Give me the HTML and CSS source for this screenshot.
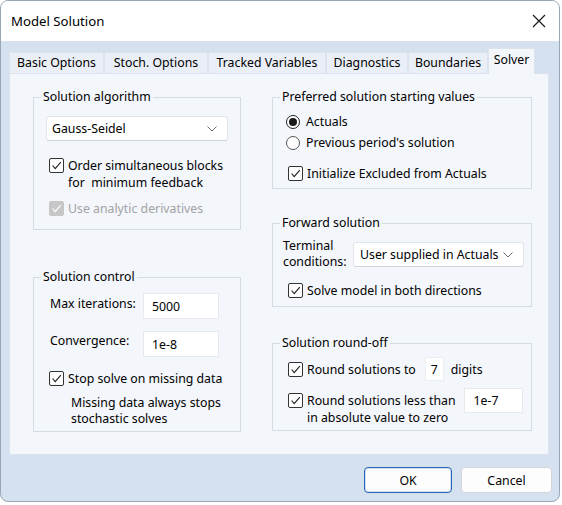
FILE: index.html
```html
<!DOCTYPE html>
<html>
<head>
<meta charset="utf-8">
<link rel="stylesheet" href="styles.css">
</head>
<body>
<div class="window">
  <div class="titlebar">
    <span class="title">Model Solution</span>
    <svg class="close" width="14" height="14" viewBox="0 0 14 14"><path d="M1 1L13 13M13 1L1 13" stroke="#1a1a1a" stroke-width="1.2" fill="none"/></svg>
  </div>
  <div class="content">
    <div class="tabs">
      <div class="tab">Basic Options</div>
      <div class="tab">Stoch. Options</div>
      <div class="tab">Tracked Variables</div>
      <div class="tab">Diagnostics</div>
      <div class="tab">Boundaries</div>
      <div class="tab active">Solver</div>
    </div>
    <div class="page">
      <div class="col col-left">
        <fieldset class="group g-algo">
          <legend>Solution algorithm</legend>
          <div class="combo combo-algo"><span>Gauss-Seidel</span><svg class="chev" width="10" height="6" viewBox="0 0 10 6"><path d="M0.5 0.5L5 5L9.5 0.5" stroke="#6b6b6b" stroke-width="1" fill="none"/></svg></div>
          <div class="check-row r-order">
            <span class="cb"><svg viewBox="0 0 15 15"><path d="M3 7.5L6 11L12.5 3.5" stroke="#202020" stroke-width="1.3" fill="none"/></svg></span>
            <span class="cb-text">Order simultaneous blocks<br>for&nbsp; minimum feedback</span>
          </div>
          <div class="check-row r-analytic disabled">
            <span class="cb cb-disabled"><svg viewBox="0 0 15 15"><path d="M3 7.5L6 11L12.5 3.5" stroke="#ffffff" stroke-width="1.3" fill="none"/></svg></span>
            <span class="cb-text">Use analytic derivatives</span>
          </div>
        </fieldset>
        <fieldset class="group g-control">
          <legend>Solution control</legend>
          <div class="field-row r-maxit">
            <span class="field-label">Max iterations:</span>
            <span class="textbox tb-num">5000</span>
          </div>
          <div class="field-row r-conv">
            <span class="field-label">Convergence:</span>
            <span class="textbox tb-num">1e-8</span>
          </div>
          <div class="check-row r-stop">
            <span class="cb"><svg viewBox="0 0 15 15"><path d="M3 7.5L6 11L12.5 3.5" stroke="#202020" stroke-width="1.3" fill="none"/></svg></span>
            <span class="cb-text">Stop solve on missing data</span>
          </div>
          <div class="note">Missing data always stops<br>stochastic solves</div>
        </fieldset>
      </div>
      <div class="col col-right">
        <fieldset class="group g-start">
          <legend>Preferred solution starting values</legend>
          <div class="radio-row r-actuals">
            <span class="radio checked"></span><span>Actuals</span>
          </div>
          <div class="radio-row">
            <span class="radio"></span><span>Previous period's solution</span>
          </div>
          <div class="check-row r-init">
            <span class="cb"><svg viewBox="0 0 15 15"><path d="M3 7.5L6 11L12.5 3.5" stroke="#202020" stroke-width="1.3" fill="none"/></svg></span>
            <span class="cb-text">Initialize Excluded from Actuals</span>
          </div>
        </fieldset>
        <fieldset class="group g-forward">
          <legend>Forward solution</legend>
          <div class="term-row">
            <span class="term-label">Terminal<br>conditions:</span>
            <div class="combo combo-term"><span>User supplied in Actuals</span><svg class="chev" width="10" height="6" viewBox="0 0 10 6"><path d="M0.5 0.5L5 5L9.5 0.5" stroke="#6b6b6b" stroke-width="1" fill="none"/></svg></div>
          </div>
          <div class="check-row r-both">
            <span class="cb"><svg viewBox="0 0 15 15"><path d="M3 7.5L6 11L12.5 3.5" stroke="#202020" stroke-width="1.3" fill="none"/></svg></span>
            <span class="cb-text">Solve model in both directions</span>
          </div>
        </fieldset>
        <fieldset class="group g-round">
          <legend>Solution round-off</legend>
          <div class="round-row r-digits">
            <span class="cb"><svg viewBox="0 0 15 15"><path d="M3 7.5L6 11L12.5 3.5" stroke="#202020" stroke-width="1.3" fill="none"/></svg></span>
            <span class="cb-text">Round solutions to</span>
            <span class="textbox tb-digit">7</span>
            <span class="digits">digits</span>
          </div>
          <div class="round-row r-less">
            <span class="cb"><svg viewBox="0 0 15 15"><path d="M3 7.5L6 11L12.5 3.5" stroke="#202020" stroke-width="1.3" fill="none"/></svg></span>
            <span class="cb-text">Round solutions less than<br>in absolute value to zero</span>
            <span class="textbox tb-less">1e-7</span>
          </div>
        </fieldset>
      </div>
    </div>
    <div class="buttons">
      <button class="btn btn-default">OK</button>
      <button class="btn">Cancel</button>
    </div>
  </div>
</div>
</body>
</html>
```

FILE: styles.css
```css
html, body {
  margin: 0;
  padding: 0;
  background: #ffffff;
}

body {
  font-family: "Noto Sans", "DejaVu Sans", sans-serif;
  font-size: 12.3px;
  color: #000000;
}

.window {
  box-sizing: border-box;
  width: 560px;
  height: 502px;
  border: 1px solid #9aa6b6;
  border-radius: 8px;
  overflow: hidden;
  background: #d6e1f0;
  display: flex;
  flex-direction: column;
}

.titlebar {
  height: 40px;
  flex: none;
  background: #ffffff;
  display: flex;
  align-items: center;
  justify-content: space-between;
  padding: 0 13px 0 10px;
}

.title {
  font-size: 13.2px;
  margin-top: -1px;
}

.close {
  display: block;
}

.content {
  flex: 1;
  padding: 7px 7px 0 8px;
  display: flex;
  flex-direction: column;
}

.tabs {
  display: flex;
  align-items: flex-end;
  height: 25px;
  flex: none;
  position: relative;
  z-index: 1;
}

.tab {
  box-sizing: border-box;
  height: 21px;
  line-height: 19px;
  text-align: center;
  background: #eaeff7;
  border: 1px solid #dde3ec;
  border-bottom: none;
  white-space: nowrap;
}

.tab:nth-child(1) { width: 95px; }
.tab:nth-child(2) { width: 104px; }
.tab:nth-child(3) { width: 118px; }
.tab:nth-child(4) { width: 82px; }
.tab:nth-child(5) { width: 80px; }
.tab:nth-child(6) { width: 47px; }

.tab.active {
  height: 26px;
  line-height: 22px;
  background: #f3f6fb;
  margin-bottom: -1px;
}

.page {
  box-sizing: border-box;
  height: 382px;
  margin-right: 3px;
  background: #f3f6fb;
  border: 1px solid #dde3ec;
  padding: 15px 0 0 23px;
  display: flex;
  gap: 31px;
  flex: none;
}

.col {
  display: flex;
  flex-direction: column;
}

.col-left { width: 208px; }
.col-right { width: 260px; }

.group {
  box-sizing: border-box;
  margin: 0;
  padding: 0 0 0 12px;
  border: 1px solid #d5dbe4;
  min-width: 0;
}

.group legend {
  padding: 0 2px;
  margin-left: -5px;
  line-height: 16px;
}

.g-algo { height: 141px; }
.g-control { height: 163px; margin-top: 39px; }
.g-start { height: 100px; }
.g-forward { height: 92px; margin-top: 26px; }
.g-round { height: 96px; margin-top: 28px; }

/* combo boxes */
.combo {
  box-sizing: border-box;
  height: 25px;
  background: #ffffff;
  border: 1px solid #e1e4e9;
  border-bottom-color: #cfd3d9;
  border-radius: 3px;
  display: flex;
  align-items: center;
  justify-content: space-between;
  padding: 0 10px 0 5px;
  white-space: nowrap;
}

.combo-algo {
  width: 182px;
  margin-top: 11px;
}

.combo-term {
  width: 171px;
  margin-top: 4px;
  padding-left: 6px;
}

.chev { display: block; flex: none; }

/* check boxes */
.check-row {
  display: flex;
  align-items: flex-start;
  line-height: 17px;
}

.cb {
  box-sizing: border-box;
  width: 15px;
  height: 15px;
  flex: none;
  border: 1px solid #333333;
  border-radius: 2px;
  background: #ffffff;
  margin: 1px 4px 0 3px;
  display: flex;
}

.cb svg {
  width: 13px;
  height: 13px;
}

.cb-disabled {
  background: #c6c6c6;
  border-color: #c6c6c6;
}

.disabled { color: #a3a3a3; }

.cb-text { white-space: nowrap; }

.r-order { margin-top: 16px; }
.r-analytic { margin-top: 9px; }
.r-stop { margin-top: 13px; }
.r-init { margin-top: 12px; }
.r-both { margin-top: 12px; }

/* fields */
.field-row {
  display: flex;
  align-items: flex-start;
  line-height: 17px;
}

.field-label {
  width: 93px;
  margin: 2px 0 0 4px;
  white-space: nowrap;
}

.r-maxit { margin-top: 8px; }
.r-conv { margin-top: 12px; }
.r-conv .field-label { margin-top: 1px; }

.textbox {
  box-sizing: border-box;
  background: #ffffff;
  border: 1px solid #e6e9ee;
  display: flex;
  align-items: center;
}

.tb-num {
  width: 76px;
  height: 26px;
  padding: 1px 0 0 8px;
}

.note {
  line-height: 16px;
  margin: 8px 0 0 25px;
  white-space: nowrap;
}

/* radios */
.radio-row {
  display: flex;
  align-items: center;
  height: 21px;
  white-space: nowrap;
}

.r-actuals { margin-top: 6px; }

.radio {
  box-sizing: border-box;
  width: 14px;
  height: 14px;
  border: 1px solid #555555;
  border-radius: 50%;
  background: #ffffff;
  margin: 0 6px 0 1px;
  flex: none;
  display: flex;
  align-items: center;
  justify-content: center;
}

.radio.checked { border-color: #222222; }

.radio.checked::after {
  content: "";
  width: 8px;
  height: 8px;
  border-radius: 50%;
  background: #1a1a1a;
}

/* forward solution */
.term-row {
  display: flex;
  align-items: flex-start;
  margin: 7px 0 0 -2px;
}

.term-label {
  width: 70px;
  line-height: 16px;
  white-space: nowrap;
}

/* round-off */
.round-row {
  display: flex;
  align-items: center;
  line-height: 17px;
}

.round-row .cb { margin-top: 0; }

.r-digits {
  margin-top: 6px;
  height: 24px;
}

.tb-digit {
  width: 19px;
  height: 24px;
  justify-content: center;
  margin-left: 9px;
  border-color: #eceef2;
}

.digits { margin-left: 7px; }

.r-less {
  margin-top: 7px;
  align-items: flex-start;
}

.r-less .cb { margin-top: 5px; }
.r-less .cb-text { margin-top: 4px; }

.tb-less {
  width: 59px;
  height: 25px;
  padding-left: 9px;
  margin-left: 8px;
}

/* buttons */
.buttons {
  display: flex;
  justify-content: flex-end;
  gap: 9px;
  margin-top: 12px;
  padding-right: 0;
}

.btn {
  box-sizing: border-box;
  height: 26px;
  width: 91px;
  background: #fdfdfe;
  border: 1px solid #d3d7dd;
  border-radius: 4px;
  font-family: "Noto Sans", "DejaVu Sans", sans-serif;
  font-size: 12.3px;
  color: #000000;
  padding: 0;
}

.btn-default {
  width: 88px;
  border: 1px solid #2a66b8;
  box-shadow: inset 0 0 0 1px #cfe0f5;
}
```
